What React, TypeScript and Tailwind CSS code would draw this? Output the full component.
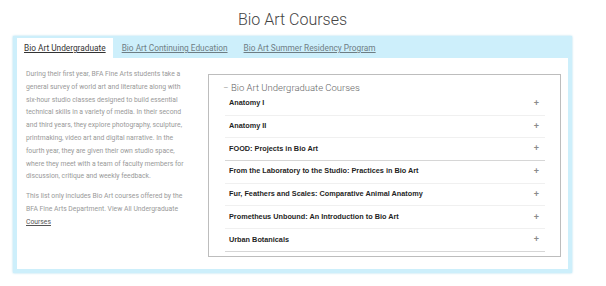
import React from "react";

const courses = [
  { name: "Anatomy I", dark: false },
  { name: "Anatomy II", dark: false },
  { name: "FOOD: Projects in Bio Art", dark: true },
  { name: "From the Laboratory to the Studio: Practices in Bio Art", dark: false },
  { name: "Fur, Feathers and Scales: Comparative Animal Anatomy", dark: false },
  { name: "Prometheus Unbound: An Introduction to Bio Art", dark: false },
  { name: "Urban Botanicals", dark: true },
];

const para1 = [
  "During their first year, BFA Fine Arts students take a",
  "general survey of world art and literature along with",
  "six-hour studio classes designed to build essential",
  "technical skills in a variety of media. In their second",
  "and third years, they explore photography, sculpture,",
  "printmaking, video art and digital narrative. In the",
  "fourth year, they are given their own studio space,",
  "where they meet with a team of faculty members for",
  "discussion, critique and weekly feedback.",
];

export default function App() {
  return (
    <div className="w-[606px] h-[286px] bg-white overflow-hidden font-['Roboto',sans-serif]">
      <div className="ml-[13px] w-[559px]">
        <h1 className="pt-[10px] text-center text-[16px] leading-[20px] font-light text-[#444]">
          Bio Art Courses
        </h1>
        <div className="mt-[6px] bg-[#cdeffb] px-[4px] pt-[2px] pb-[4px] shadow-[0_0_2px_rgba(150,210,235,0.8)]">
          <div className="flex h-[20px] items-center text-[8.3px] leading-[20px]">
            <div className="bg-white px-[7px] h-[20px] text-[#333] underline">Bio Art Undergraduate</div>
            <div className="px-[8px] text-[#6d7d84] underline ml-[1px]">Bio Art Continuing Education</div>
            <div className="px-[8px] text-[#6d7d84] underline">Bio Art Summer Residency Program</div>
          </div>
          <div className="bg-white h-[211px] flex items-start">
            <div className="pl-[9px] pt-[10px] w-[190px] text-[6.8px] leading-[12.8px] text-[#999] whitespace-nowrap">
              <p>
                {para1.map((l, i) => (
                  <React.Fragment key={i}>
                    {l}
                    {i < para1.length - 1 && <br />}
                  </React.Fragment>
                ))}
              </p>
              <p className="mt-[7px]">
                This list only includes Bio Art courses offered by the
                <br />
                BFA Fine Arts Department. View All Undergraduate
                <br />
                <span className="underline text-[#555]">Courses</span>
              </p>
            </div>
            <div className="ml-[1px] mt-[16px] w-[353px] h-[183px] border border-[#bdbdbd] pl-[16px] pr-[15px]">
              <div className="flex items-center h-[18px] pt-[7px] text-[9.5px] leading-[11px] font-light text-[#666]">
                <span className="w-[7px] ml-[-2px] text-[#888]">−</span>
                <span className="ml-[1px]">Bio Art Undergraduate Courses</span>
              </div>
              {courses.map((c) => (
                <div
                  key={c.name}
                  className={
                    "flex items-center justify-between h-[22.7px] pl-[4px] pr-[6px] border-b font-['Liberation_Sans',Arial,sans-serif] font-bold text-[7.3px] text-[#1f1f1f] " +
                    (c.dark ? "border-[#d6d6d6]" : "border-[#f0f0f0]")
                  }
                >
                  <span>{c.name}</span>
                  <span className="text-[9px] font-bold text-[#8a8a8a]">+</span>
                </div>
              ))}
            </div>
          </div>
        </div>
      </div>
    </div>
  );
}
